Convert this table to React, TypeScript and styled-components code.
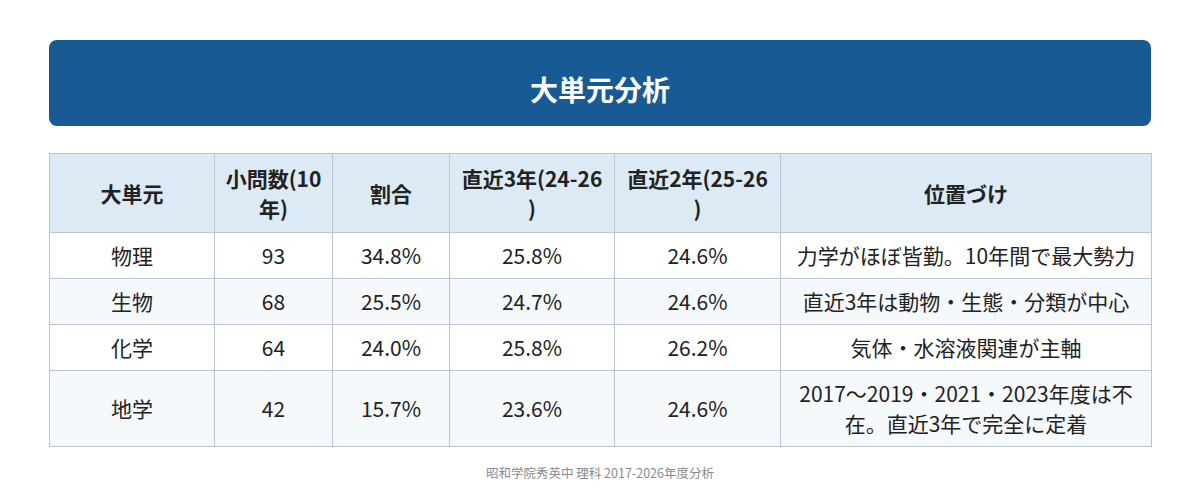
import React from "react";
import styled, { createGlobalStyle } from "styled-components";

const GlobalStyle = createGlobalStyle`
  html, body {
    margin: 0;
    padding: 0;
    background: #ffffff;
  }

  body {
    font-family: "Noto Sans CJK JP", "Noto Sans", sans-serif;
    color: #222;
  }
`;

const Page = styled.div`
  width: 1102px;
  margin: 0 auto;
  padding-top: 40px;
`;

const TitleBar = styled.header`
  background: #175a94;
  border-radius: 8px;
  padding: 28px 0 16px;
  text-align: center;
`;

const Title = styled.h1`
  margin: 0;
  color: #ffffff;
  font-size: 28px;
  font-weight: 700;
  line-height: 42px;
`;

const Table = styled.table`
  width: 100%;
  margin-top: 27px;
  border-collapse: collapse;
  table-layout: fixed;
`;

// header labels carry their own line breaks (\n), as in the source sheet
const HeadCell = styled.th`
  background: #dceaf6;
  border: 1px solid #b9c5d2;
  padding: 9px 8px;
  font-size: 21px;
  font-weight: 700;
  line-height: 30px;
  text-align: center;
  color: #222;
  white-space: pre-line;
`;

const Row = styled.tr<{ $alt?: boolean }>`
  background: ${(p) => (p.$alt ? "#f6f9fc" : "#ffffff")};
`;

const Cell = styled.td`
  border: 1px solid #b9c5d2;
  padding: 7px 12px 8px;
  font-size: 21px;
  line-height: 30px;
  text-align: center;
  color: #222;
`;

const Footer = styled.p`
  margin: 17px 0 0;
  font-size: 12.5px;
  line-height: 18px;
  text-align: center;
  color: #8a8a8a;
`;

const columns = [
  { label: "大単元", width: 165 },
  { label: "小問数(10\n年)", width: 118 },
  { label: "割合", width: 117 },
  { label: "直近3年(24-26\n)", width: 165 },
  { label: "直近2年(25-26\n)", width: 166 },
  { label: "位置づけ", width: 371 },
];

const rows = [
  ["物理", "93", "34.8%", "25.8%", "24.6%", "力学がほぼ皆勤。10年間で最大勢力"],
  ["生物", "68", "25.5%", "24.7%", "24.6%", "直近3年は動物・生態・分類が中心"],
  ["化学", "64", "24.0%", "25.8%", "26.2%", "気体・水溶液関連が主軸"],
  [
    "地学",
    "42",
    "15.7%",
    "23.6%",
    "24.6%",
    "2017〜2019・2021・2023年度は不在。直近3年で完全に定着",
  ],
];

const App = () => {
  return (
    <>
      <GlobalStyle />
      <Page>
        <TitleBar>
          <Title>大単元分析</Title>
        </TitleBar>

        <Table>
          <colgroup>
            {columns.map((c) => (
              <col key={c.label} style={{ width: c.width }} />
            ))}
          </colgroup>
          <thead>
            <tr>
              {columns.map((c) => (
                <HeadCell key={c.label}>{c.label}</HeadCell>
              ))}
            </tr>
          </thead>
          <tbody>
            {rows.map((r, i) => (
              <Row key={r[0]} $alt={i % 2 === 1}>
                {r.map((v, j) => (
                  <Cell key={j}>{v}</Cell>
                ))}
              </Row>
            ))}
          </tbody>
        </Table>

        <Footer>昭和学院秀英中 理科 2017-2026年度分析</Footer>
      </Page>
    </>
  );
};

export default App;
